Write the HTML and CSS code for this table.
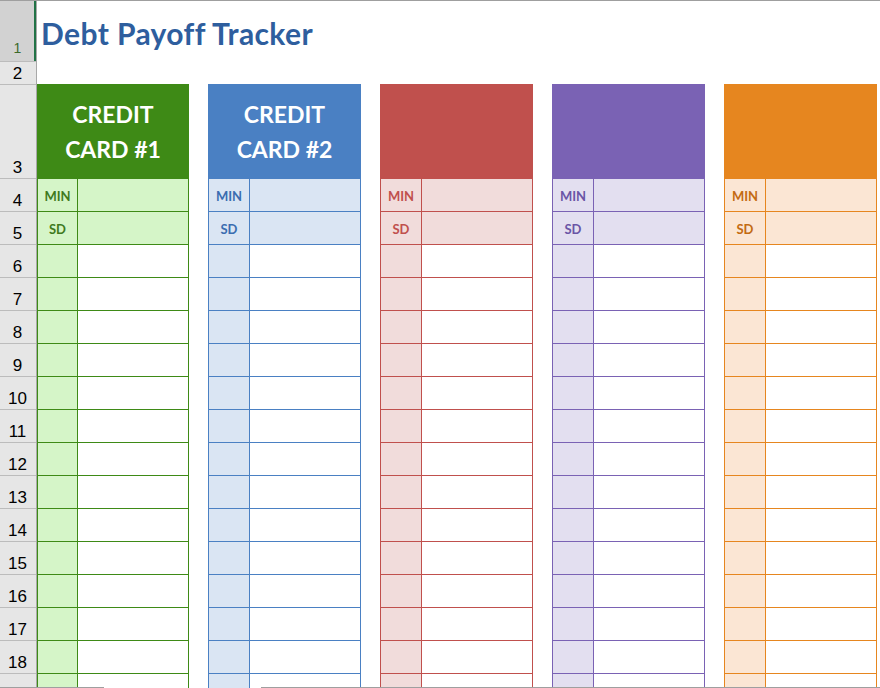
FILE: index.html
```html
<!DOCTYPE html>
<html>
<head>
<meta charset="utf-8">
<link rel="stylesheet" href="styles.css">
</head>
<body>
<div class="topline"></div>
<div class="sheet">
  <div class="rowhead">
    <div class="rh r1 sel">1</div>
    <div class="rh r2">2</div>
    <div class="rh r3">3</div>
    <div class="rh">4</div>
    <div class="rh">5</div>
    <div class="rh">6</div>
    <div class="rh">7</div>
    <div class="rh">8</div>
    <div class="rh">9</div>
    <div class="rh">10</div>
    <div class="rh">11</div>
    <div class="rh">12</div>
    <div class="rh">13</div>
    <div class="rh">14</div>
    <div class="rh">15</div>
    <div class="rh">16</div>
    <div class="rh">17</div>
    <div class="rh">18</div>
    <div class="rh"></div>
  </div>
  <div class="main">
    <div class="title-row"><h1 class="title">Debt Payoff Tracker</h1></div>
    <div class="cards">
      <div class="card green first">
        <div class="card-head">CREDIT<br>CARD #1</div>
        <div class="row"><div class="lbl">MIN</div><div class="val"></div></div>
        <div class="row"><div class="lbl">SD</div><div class="val"></div></div>
        <div class="row"><div class="lbl"></div><div class="val"></div></div>
        <div class="row"><div class="lbl"></div><div class="val"></div></div>
        <div class="row"><div class="lbl"></div><div class="val"></div></div>
        <div class="row"><div class="lbl"></div><div class="val"></div></div>
        <div class="row"><div class="lbl"></div><div class="val"></div></div>
        <div class="row"><div class="lbl"></div><div class="val"></div></div>
        <div class="row"><div class="lbl"></div><div class="val"></div></div>
        <div class="row"><div class="lbl"></div><div class="val"></div></div>
        <div class="row"><div class="lbl"></div><div class="val"></div></div>
        <div class="row"><div class="lbl"></div><div class="val"></div></div>
        <div class="row"><div class="lbl"></div><div class="val"></div></div>
        <div class="row"><div class="lbl"></div><div class="val"></div></div>
        <div class="row"><div class="lbl"></div><div class="val"></div></div>
        <div class="row"><div class="lbl"></div><div class="val"></div></div>
      </div>
      <div class="card blue">
        <div class="card-head">CREDIT<br>CARD #2</div>
        <div class="row"><div class="lbl">MIN</div><div class="val"></div></div>
        <div class="row"><div class="lbl">SD</div><div class="val"></div></div>
        <div class="row"><div class="lbl"></div><div class="val"></div></div>
        <div class="row"><div class="lbl"></div><div class="val"></div></div>
        <div class="row"><div class="lbl"></div><div class="val"></div></div>
        <div class="row"><div class="lbl"></div><div class="val"></div></div>
        <div class="row"><div class="lbl"></div><div class="val"></div></div>
        <div class="row"><div class="lbl"></div><div class="val"></div></div>
        <div class="row"><div class="lbl"></div><div class="val"></div></div>
        <div class="row"><div class="lbl"></div><div class="val"></div></div>
        <div class="row"><div class="lbl"></div><div class="val"></div></div>
        <div class="row"><div class="lbl"></div><div class="val"></div></div>
        <div class="row"><div class="lbl"></div><div class="val"></div></div>
        <div class="row"><div class="lbl"></div><div class="val"></div></div>
        <div class="row"><div class="lbl"></div><div class="val"></div></div>
        <div class="row"><div class="lbl"></div><div class="val"></div></div>
      </div>
      <div class="card red">
        <div class="card-head"></div>
        <div class="row"><div class="lbl">MIN</div><div class="val"></div></div>
        <div class="row"><div class="lbl">SD</div><div class="val"></div></div>
        <div class="row"><div class="lbl"></div><div class="val"></div></div>
        <div class="row"><div class="lbl"></div><div class="val"></div></div>
        <div class="row"><div class="lbl"></div><div class="val"></div></div>
        <div class="row"><div class="lbl"></div><div class="val"></div></div>
        <div class="row"><div class="lbl"></div><div class="val"></div></div>
        <div class="row"><div class="lbl"></div><div class="val"></div></div>
        <div class="row"><div class="lbl"></div><div class="val"></div></div>
        <div class="row"><div class="lbl"></div><div class="val"></div></div>
        <div class="row"><div class="lbl"></div><div class="val"></div></div>
        <div class="row"><div class="lbl"></div><div class="val"></div></div>
        <div class="row"><div class="lbl"></div><div class="val"></div></div>
        <div class="row"><div class="lbl"></div><div class="val"></div></div>
        <div class="row"><div class="lbl"></div><div class="val"></div></div>
        <div class="row"><div class="lbl"></div><div class="val"></div></div>
      </div>
      <div class="card purple">
        <div class="card-head"></div>
        <div class="row"><div class="lbl">MIN</div><div class="val"></div></div>
        <div class="row"><div class="lbl">SD</div><div class="val"></div></div>
        <div class="row"><div class="lbl"></div><div class="val"></div></div>
        <div class="row"><div class="lbl"></div><div class="val"></div></div>
        <div class="row"><div class="lbl"></div><div class="val"></div></div>
        <div class="row"><div class="lbl"></div><div class="val"></div></div>
        <div class="row"><div class="lbl"></div><div class="val"></div></div>
        <div class="row"><div class="lbl"></div><div class="val"></div></div>
        <div class="row"><div class="lbl"></div><div class="val"></div></div>
        <div class="row"><div class="lbl"></div><div class="val"></div></div>
        <div class="row"><div class="lbl"></div><div class="val"></div></div>
        <div class="row"><div class="lbl"></div><div class="val"></div></div>
        <div class="row"><div class="lbl"></div><div class="val"></div></div>
        <div class="row"><div class="lbl"></div><div class="val"></div></div>
        <div class="row"><div class="lbl"></div><div class="val"></div></div>
        <div class="row"><div class="lbl"></div><div class="val"></div></div>
      </div>
      <div class="card orange">
        <div class="card-head"></div>
        <div class="row"><div class="lbl">MIN</div><div class="val"></div></div>
        <div class="row"><div class="lbl">SD</div><div class="val"></div></div>
        <div class="row"><div class="lbl"></div><div class="val"></div></div>
        <div class="row"><div class="lbl"></div><div class="val"></div></div>
        <div class="row"><div class="lbl"></div><div class="val"></div></div>
        <div class="row"><div class="lbl"></div><div class="val"></div></div>
        <div class="row"><div class="lbl"></div><div class="val"></div></div>
        <div class="row"><div class="lbl"></div><div class="val"></div></div>
        <div class="row"><div class="lbl"></div><div class="val"></div></div>
        <div class="row"><div class="lbl"></div><div class="val"></div></div>
        <div class="row"><div class="lbl"></div><div class="val"></div></div>
        <div class="row"><div class="lbl"></div><div class="val"></div></div>
        <div class="row"><div class="lbl"></div><div class="val"></div></div>
        <div class="row"><div class="lbl"></div><div class="val"></div></div>
        <div class="row"><div class="lbl"></div><div class="val"></div></div>
        <div class="row"><div class="lbl"></div><div class="val"></div></div>
      </div>
    </div>
  </div>
</div>
<div class="bottom-line"><span class="seg a"></span><span class="seg gap"></span><span class="seg b"></span></div>
</body>
</html>
```

FILE: styles.css
```css
* { box-sizing: border-box; }
html, body {
  margin: 0;
  padding: 0;
  width: 880px;
  height: 688px;
  overflow: hidden;
  background: #ffffff;
}
body {
  position: relative;
  font-family: "Lato", "Open Sans", sans-serif;
}
.topline {
  height: 1px;
  background: #9f9f9f;
}
.sheet {
  display: flex;
  align-items: flex-start;
}
.rowhead {
  width: 37px;
  flex: none;
  display: flex;
  flex-direction: column;
  background: #e6e6e6;
  border-right: 1px solid #a8a8a8;
  height: 687px;
}
.rh {
  height: 33px;
  flex: none;
  border-bottom: 1px solid #bcbcbc;
  display: flex;
  align-items: flex-end;
  justify-content: center;
  font-family: "Liberation Sans", Arial, sans-serif;
  font-size: 17px;
  line-height: 17px;
  padding-bottom: 2px;
  padding-right: 1px;
  color: #000;
}
.rh.r1 { height: 61px; }
.rh.r2 { height: 23px; }
.rh.r3 { height: 94px; }
.rh.sel {
  background: #d2d2d2;
  color: #3d6a2a;
  font-size: 14px;
  padding-bottom: 4px;
  box-shadow: inset -2px 0 0 #217346;
}
.main {
  flex: 1;
  min-width: 0;
}
.title-row {
  height: 83px;
  padding: 14px 0 0 4px;
}
.title {
  margin: 0;
  font-family: "Lato", "Open Sans", sans-serif;
  font-weight: 700;
  font-size: 30px;
  line-height: 36px;
  color: #2e5e9e;
  letter-spacing: 0.4px;
}
.cards {
  display: flex;
  gap: 19px;
}
.card {
  width: 153px;
  flex: none;
  border-left: 1px solid var(--c);
  border-right: 1px solid var(--c);
}
.card.first { width: 152px; }
.card-head {
  height: 95px;
  margin: 0 -1px;
  background: var(--c);
  color: #ffffff;
  font-weight: 700;
  font-size: 23px;
  line-height: 35px;
  text-align: center;
  display: flex;
  align-items: center;
  justify-content: center;
}
.row {
  display: grid;
  grid-template-columns: 41px 1fr;
  height: 33px;
  border-bottom: 1px solid var(--c);
}
.card.first .row { grid-template-columns: 40px 1fr; }
.lbl {
  background: var(--l);
  border-right: 1px solid var(--c);
  color: var(--t);
  font-weight: 700;
  font-size: 13px;
  display: flex;
  align-items: center;
  justify-content: center;
  padding-top: 1px;
}
.val { background: #ffffff; }
.row:nth-of-type(2) .val,
.row:nth-of-type(3) .val { background: var(--l); }

.green  { --c: #3e8a16; --l: #d5f5c8; --t: #3f7a1d; }
.blue   { --c: #4a80c3; --l: #dae5f3; --t: #3a6db0; }
.red    { --c: #c0504d; --l: #f1dcdb; --t: #c0504d; }
.purple { --c: #7a62b4; --l: #e3dff0; --t: #6a55a6; }
.orange { --c: #e6861f; --l: #fbe6d4; --t: #c36b12; }

.bottom-line {
  position: absolute;
  left: 0;
  right: 0;
  bottom: 0;
  height: 1px;
  display: flex;
}
.seg { display: block; height: 1px; }
.seg.a { width: 104px; background: #9f9f9f; }
.seg.gap { width: 157px; }
.seg.b { flex: 1; background: #9f9f9f; }
```
